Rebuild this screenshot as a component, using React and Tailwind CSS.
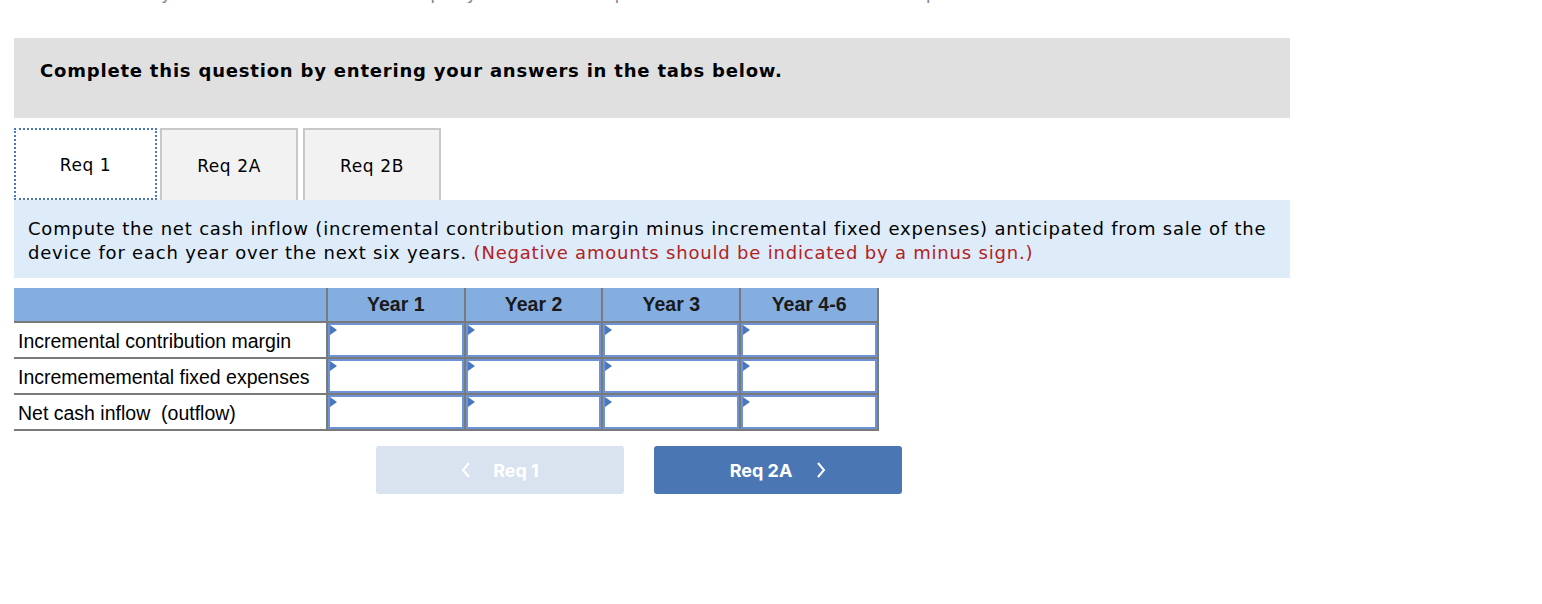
import React from 'react';

const years = ['Year 1', 'Year 2', 'Year 3', 'Year 4-6'];
const rows = [
  'Incremental contribution margin',
  'Incremememental fixed expenses',
  'Net cash inflow  (outflow)',
];

function AmountInput() {
  return (
    <div className="relative h-full border-2 border-[#6b93d6] bg-white">
      <span className="absolute left-0 top-0 h-0 w-0 border-y-[5px] border-l-[7px] border-y-transparent border-l-[#4a78c0]" />
    </div>
  );
}

function Tab({ label, active }) {
  if (active) {
    return (
      <div className="flex h-[72px] w-[143px] items-center justify-center border-2 border-dotted border-[#4a78c0] bg-white pt-[4px] text-[17px] tracking-[0.6px] text-black">
        {label}
      </div>
    );
  }
  return (
    <div className="flex h-[72px] w-[138px] items-center justify-center border-2 border-b-0 border-[#c8c8c8] bg-[#f2f2f2] pt-[3px] text-[17px] tracking-[0.6px] text-black">
      {label}
    </div>
  );
}

export default function App() {
  return (
    <div className="h-[604px] w-[1542px] overflow-hidden bg-white font-['DejaVu_Sans',Verdana,sans-serif]">
      {/* cut off line from previous part of the question */}
      <div className="h-[3px] overflow-hidden">
        <p className="mt-[-17px] pl-[40px] text-[18px] leading-[20px] tracking-[0.8px] text-[#888]">
          What would you recommend to the company about the acquisition of the device as a new product?
        </p>
      </div>

      <div className="ml-[14px] w-[1276px]">
        <div className="mt-[35px] h-[80px] bg-[#e0e0e0] pl-[26px] pt-[22px]">
          <p className="text-[18px] font-bold leading-[22px] tracking-[0.8px] text-black">
            Complete this question by entering your answers in the tabs below.
          </p>
        </div>

        <div className="mt-[10px] flex items-end gap-[3px]">
          <Tab label="Req 1" active />
          <Tab label="Req 2A" />
          <div className="ml-[2px]">
            <Tab label="Req 2B" />
          </div>
        </div>

        <div className="bg-[#deebf8] px-[14px] pb-[13px] pt-[17px] text-[18px] leading-[24px] tracking-[0.8px] text-black">
          Compute the net cash inflow (incremental contribution margin minus incremental fixed expenses) anticipated from sale of the device for each year over the next six years.{' '}
          <span className="text-[#b22222]">(Negative amounts should be indicated by a minus sign.)</span>
        </div>

        <table className="mt-[10px] w-[865px] border-collapse font-['Liberation_Sans',Arial,sans-serif] text-[19.5px]">
          <thead>
            <tr className="h-[34px] bg-[#84ade0]">
              <th className="w-[313px] border-b-2 border-[#7a7a7a]" />
              {years.map((y) => (
                <th
                  key={y}
                  className="w-[138px] border-2 border-t-0 border-[#7a7a7a] text-center text-[19.5px] font-bold text-[#1a1a1a]"
                >
                  {y}
                </th>
              ))}
            </tr>
          </thead>
          <tbody>
            {rows.map((r) => (
              <tr key={r} className="h-[36px]">
                <td className="whitespace-pre border-b-2 border-[#7a7a7a] pl-[4px] pt-[3px] text-left text-black">{r}</td>
                {years.map((y) => (
                  <td key={y} className="h-[36px] border-2 border-[#7a7a7a] p-0">
                    <AmountInput />
                  </td>
                ))}
              </tr>
            ))}
          </tbody>
        </table>

        <div className="ml-[362px] mt-[15px] flex gap-[30px] font-['Inter',Roboto,sans-serif]">
          <button className="flex h-[48px] w-[248px] items-center justify-center gap-[22px] rounded-[3px] bg-[#d9e3ef] text-[18px] font-bold text-white">
            <svg width="10" height="16" viewBox="0 0 10 16" fill="none" stroke="white" strokeWidth="2">
              <path d="M8 1 L2 8 L8 15" />
            </svg>
            Req 1
          </button>
          <button className="flex h-[48px] w-[248px] items-center justify-center gap-[24px] rounded-[3px] bg-[#4a76b4] text-[18px] font-bold text-white">
            Req 2A
            <svg width="10" height="16" viewBox="0 0 10 16" fill="none" stroke="white" strokeWidth="2">
              <path d="M2 1 L8 8 L2 15" />
            </svg>
          </button>
        </div>
      </div>
    </div>
  );
}
